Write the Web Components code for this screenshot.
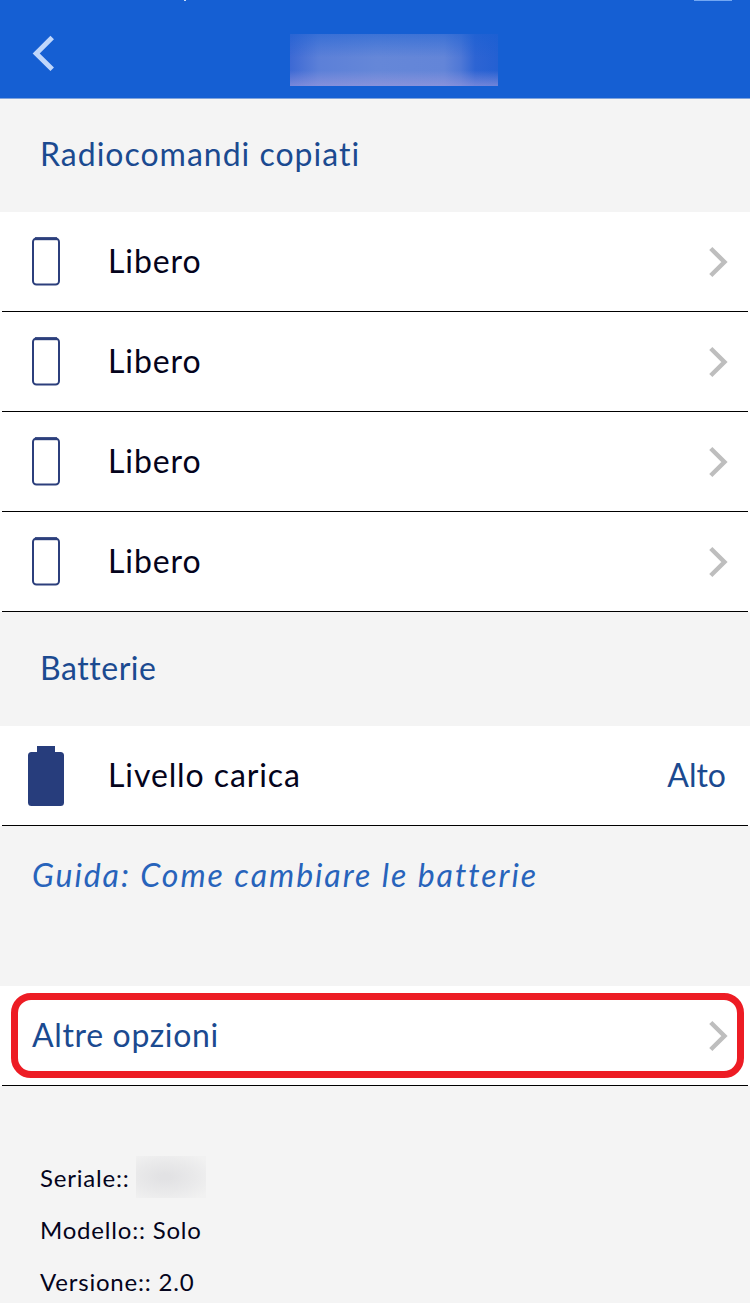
<!DOCTYPE html>
<html lang="it">
<head>
<meta charset="utf-8">
<title>Radiocomandi</title>
<style>
  html, body {
    margin: 0;
    height: 1303px;
    overflow: hidden;
  }
  body {
    background: #f4f4f4;
    font-family: Lato, "Open Sans", sans-serif;
    font-size: 32px;
    color: #04041c;
  }
  .first { height: 113px; letter-spacing: 1px; }
</style>
</head>
<body>
<remote-screen>
  <nav-header slot="header"></nav-header>
  <section-title class="first">Radiocomandi copiati</section-title>
  <list-row icon="remote" chevron>Libero</list-row>
  <list-row icon="remote" chevron>Libero</list-row>
  <list-row icon="remote" chevron>Libero</list-row>
  <list-row icon="remote" chevron>Libero</list-row>
  <section-title>Batterie</section-title>
  <list-row icon="battery">Livello carica<span slot="value">Alto</span></list-row>
  <guide-link>Guida: Come cambiare le batterie</guide-link>
  <list-row chevron highlight>Altre opzioni</list-row>
  <device-info>
    <info-line>Seriale::<redacted-box slot="value"></redacted-box></info-line>
    <info-line>Modello:: Solo</info-line>
    <info-line>Versione:: 2.0</info-line>
  </device-info>
</remote-screen>

<script>
class RemoteScreen extends HTMLElement {
  constructor() {
    super();
    this.attachShadow({ mode: 'open' });
    this.shadowRoot.innerHTML = `
      <style>
        :host {
          display: flex;
          flex-direction: column;
          width: 750px;
          height: 1303px;
          overflow: hidden;
          background: #f4f4f4;
        }
      </style>
      <slot name="header"></slot>
      <slot></slot>
    `;
  }
}

class NavHeader extends HTMLElement {
  constructor() {
    super();
    this.attachShadow({ mode: 'open' });
    this.shadowRoot.innerHTML = `
      <style>
        :host {
          display: grid;
          grid-template-columns: 290px 208px 1fr;
          flex: none;
          height: 99px;
          box-sizing: border-box;
          background: #155fd3;
          border-bottom: 1px solid #7fa3dc;
          position: relative;
        }
        .back {
          margin: 34px 0 0 30px;
          width: 28px;
          height: 40px;
        }
        .title {
          margin-top: 34px;
          height: 52px;
          background:
            linear-gradient(to bottom, transparent 70%, rgba(160, 155, 222, .6)),
            linear-gradient(to bottom, rgba(21, 95, 211, .5), transparent 45%),
            linear-gradient(to right, #3c69d4, #5c80d8 14%, #6587d8 42%, #6385d8 74%, #4f78d6 82%, #2d64d3 89%, #2460d2);
        }
        /* lower edges of the status bar glyphs */
        .status {
          position: absolute;
          top: 0;
          height: 1px;
        }
        .dot { left: 184px; width: 2px; background: #c6dcfa; }
        .cell { left: 694px; width: 38px; background: #72a7f3; }
      </style>
      <svg class="back" viewBox="0 0 28 40" fill="none" stroke="#c0d7fb" stroke-width="5">
        <path d="M22.200 3.500L6.200 19.500L22.200 35.300"/>
      </svg>
      <div class="title"></div>
      <i class="status dot"></i>
      <i class="status cell"></i>
    `;
  }
}

class SectionTitle extends HTMLElement {
  constructor() {
    super();
    this.attachShadow({ mode: 'open' });
    this.shadowRoot.innerHTML = `
      <style>
        :host {
          display: flex;
          align-items: center;
          flex: none;
          box-sizing: border-box;
          height: 114px;
          padding: 0 40px 4px;
          color: #1b4a90;
          letter-spacing: 0.55px;
        }
      </style>
      <slot></slot>
    `;
  }
}

const ICONS = {
  remote: `
    <svg width="46" height="60" viewBox="0 0 46 60" fill="none" stroke="#2c3f7c">
      <rect x="10" y="6.500" width="26" height="46" rx="3.500" stroke-width="2"/>
      <path d="M12 6.700H34" stroke-width="3"/>
    </svg>`,
  battery: `
    <svg width="46" height="60" viewBox="0 0 46 60" fill="#273d7c">
      <path d="M14 0H32V6H37.500Q41 6 41 9.500V56.500Q41 60 37.500 60H8.500Q5 60 5 56.500V9.500Q5 6 8.500 6H14Z"/>
    </svg>`
};

class ListRow extends HTMLElement {
  constructor() {
    super();
    this.attachShadow({ mode: 'open' });
  }

  connectedCallback() {
    const icon = ICONS[this.getAttribute('icon')];
    this.shadowRoot.innerHTML = `
      <style>
        :host {
          display: flex;
          flex: none;
          position: relative;
          box-sizing: border-box;
          height: 100px;
          padding: 0 2px;
          background: #fff;
          letter-spacing: 0.9px;
        }
        :host([highlight]) {
          color: #1b4a90;
          letter-spacing: 0.65px;
        }
        .row {
          display: flex;
          flex: 1;
          align-items: center;
          border-bottom: 1px solid #000;
          padding: 0 18px 0 30px;
        }
        .icon {
          display: flex;
          width: 76px;
          margin-left: -9px;
          padding-right: 9px;
        }
        .label { flex: 1; padding-bottom: 2px; }
        .value {
          color: #1b4a90;
          padding: 0 4px 2px 0;
          letter-spacing: 0;
        }
        .chevron { display: block; }
        .frame {
          position: absolute;
          inset: 7px 6px 8px 11px;
          border: 7px solid #ed1c24;
          border-radius: 20px;
        }
      </style>
      <div class="row">
        ${icon ? `<span class="icon">${icon}</span>` : ''}
        <span class="label"><slot></slot></span>
        <span class="value"><slot name="value"></slot></span>
        ${this.hasAttribute('chevron') ? `
          <svg class="chevron" width="22" height="34" viewBox="0 0 22 34" fill="none" stroke="#bebebe" stroke-width="4.500">
            <path d="M2.800 3.500L16.400 17L2.800 30.500"/>
          </svg>` : ''}
      </div>
      ${this.hasAttribute('highlight') ? '<div class="frame"></div>' : ''}
    `;
  }
}

class GuideLink extends HTMLElement {
  constructor() {
    super();
    this.attachShadow({ mode: 'open' });
    this.shadowRoot.innerHTML = `
      <style>
        :host {
          display: block;
          flex: none;
          box-sizing: border-box;
          height: 160px;
          padding: 29px 32px 0;
          line-height: 40px;
          font-style: italic;
          color: #2763bb;
          letter-spacing: 1.98px;
        }
      </style>
      <slot></slot>
    `;
  }
}

class DeviceInfo extends HTMLElement {
  constructor() {
    super();
    this.attachShadow({ mode: 'open' });
    this.shadowRoot.innerHTML = `
      <style>
        :host {
          display: flex;
          flex-direction: column;
          flex: none;
          padding: 66px 40px 0;
          font-size: 24px;
        }
      </style>
      <slot></slot>
    `;
  }
}

class InfoLine extends HTMLElement {
  constructor() {
    super();
    this.attachShadow({ mode: 'open' });
    this.shadowRoot.innerHTML = `
      <style>
        :host {
          display: flex;
          align-items: center;
          gap: 6px;
          height: 52px;
          line-height: 52px;
          letter-spacing: 0.8px;
        }
      </style>
      <span><slot></slot></span>
      <slot name="value"></slot>
    `;
  }
}

class RedactedBox extends HTMLElement {
  constructor() {
    super();
    this.attachShadow({ mode: 'open' });
    this.shadowRoot.innerHTML = `
      <style>
        :host {
          display: block;
          width: 70px;
          height: 42px;
          margin-bottom: 2px;
          background: radial-gradient(ellipse at 42% 50%, #e2e2e4 10%, #e9e9ea 50%, #f1f1f1 90%);
        }
      </style>
    `;
  }
}

customElements.define('remote-screen', RemoteScreen);
customElements.define('nav-header', NavHeader);
customElements.define('section-title', SectionTitle);
customElements.define('list-row', ListRow);
customElements.define('guide-link', GuideLink);
customElements.define('device-info', DeviceInfo);
customElements.define('info-line', InfoLine);
customElements.define('redacted-box', RedactedBox);
</script>
</body>
</html>
